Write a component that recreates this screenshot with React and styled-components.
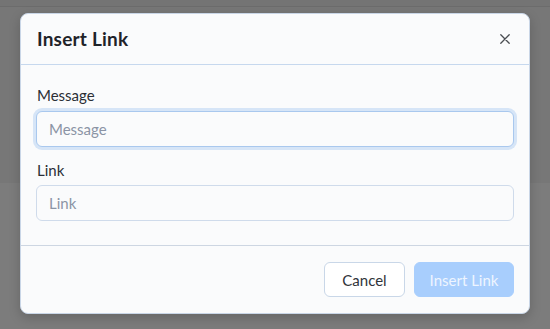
import React from "react";
import styled, { createGlobalStyle } from "styled-components";

const GlobalStyle = createGlobalStyle`
  html, body {
    margin: 0;
    padding: 0;
    width: 550px;
    height: 329px;
    overflow: hidden;
    font-family: "Lato", "Noto Sans", sans-serif;
  }
`;

const Page = styled.div`
  position: relative;
  width: 550px;
  height: 329px;
  display: flex;
  flex-direction: column;
  background: #7c7c7c;
`;

const TopStrip = styled.div`
  height: 6px;
  background: #747474;
  border-bottom: 1px solid #6c6c6c;
`;

const Band = styled.div`
  height: 176px;
  background: #777777;
`;

const Dialog = styled.div`
  position: absolute;
  left: 20px;
  top: 13px;
  width: 510px;
  height: 301px;
  box-sizing: border-box;
  display: flex;
  flex-direction: column;
  background: #fafbfc;
  border: 1px solid #c9d6e7;
  border-radius: 8px;
  box-shadow: 0 4px 12px rgba(0, 0, 0, 0.18);
  overflow: hidden;
`;

const Header = styled.div`
  height: 50px;
  display: flex;
  align-items: center;
  justify-content: space-between;
  padding: 0 16px;
  border-bottom: 1px solid #c6d8ee;
`;

const Title = styled.h2`
  margin: 0;
  font-size: 19px;
  line-height: 24px;
  font-weight: 700;
  letter-spacing: 0.2px;
  color: #1f2329;
`;

const CloseButton = styled.button`
  width: 20px;
  height: 20px;
  padding: 0;
  border: none;
  background: transparent;
  display: flex;
  align-items: center;
  justify-content: center;
  margin-right: -2px;
  cursor: pointer;
`;

const Body = styled.div`
  display: flex;
  flex-direction: column;
  padding: 20px 15px 24px;
  border-bottom: 1px solid #cdd6e2;
`;

const Label = styled.label`
  font-size: 15px;
  line-height: 20px;
  color: #2b2f36;
  padding-left: 1px;
  margin-bottom: ${(p) => p.$gap}px;
`;

const Input = styled.input`
  height: 36px;
  box-sizing: border-box;
  width: 100%;
  padding: 0 12px;
  font-family: inherit;
  font-size: 15px;
  color: #2b2f36;
  background: #fafbfc;
  border: 1px solid ${(p) => (p.$focused ? "#a9c8ee" : "#cfdbeb")};
  border-radius: 6px;
  outline: none;
  box-shadow: ${(p) => (p.$focused ? "0 0 0 3px #d6e5f7" : "none")};
  margin-bottom: ${(p) => p.$after}px;

  &::placeholder {
    color: #8b94a5;
  }
`;

const Footer = styled.div`
  flex: 1;
  display: flex;
  justify-content: flex-end;
  align-items: flex-start;
  gap: 9px;
  padding: 16px 15px 0;
`;

const Button = styled.button`
  height: 35px;
  box-sizing: border-box;
  padding: 0;
  font-family: inherit;
  font-size: 15px;
  white-space: nowrap;
  border-radius: 6px;
  cursor: pointer;
  border: 1px solid ${(p) => (p.$primary ? "#a8cefd" : "#c9d7e8")};
  background: ${(p) => (p.$primary ? "#a8cefd" : "#ffffff")};
  color: ${(p) => (p.$primary ? "#eef5ff" : "#30343a")};
  width: ${(p) => p.$width}px;
`;

export default function App() {
  return (
    <Page>
      <GlobalStyle />
      <TopStrip />
      <Band />
      <Dialog>
        <Header>
          <Title>Insert Link</Title>
          <CloseButton aria-label="Close">
            <svg width="10" height="10" viewBox="0 0 10 10">
              <path
                d="M0.8 0.8 L9.2 9.2 M9.2 0.8 L0.8 9.2"
                stroke="#4a4d52"
                strokeWidth="1.3"
                strokeLinecap="round"
              />
            </svg>
          </CloseButton>
        </Header>
        <Body>
          <Label $gap={6}>Message</Label>
          <Input $focused $after={13} placeholder="Message" autoFocus />
          <Label $gap={5}>Link</Label>
          <Input $after={0} placeholder="Link" />
        </Body>
        <Footer>
          <Button $width={81}>Cancel</Button>
          <Button $primary $width={100}>
            Insert Link
          </Button>
        </Footer>
      </Dialog>
    </Page>
  );
}
